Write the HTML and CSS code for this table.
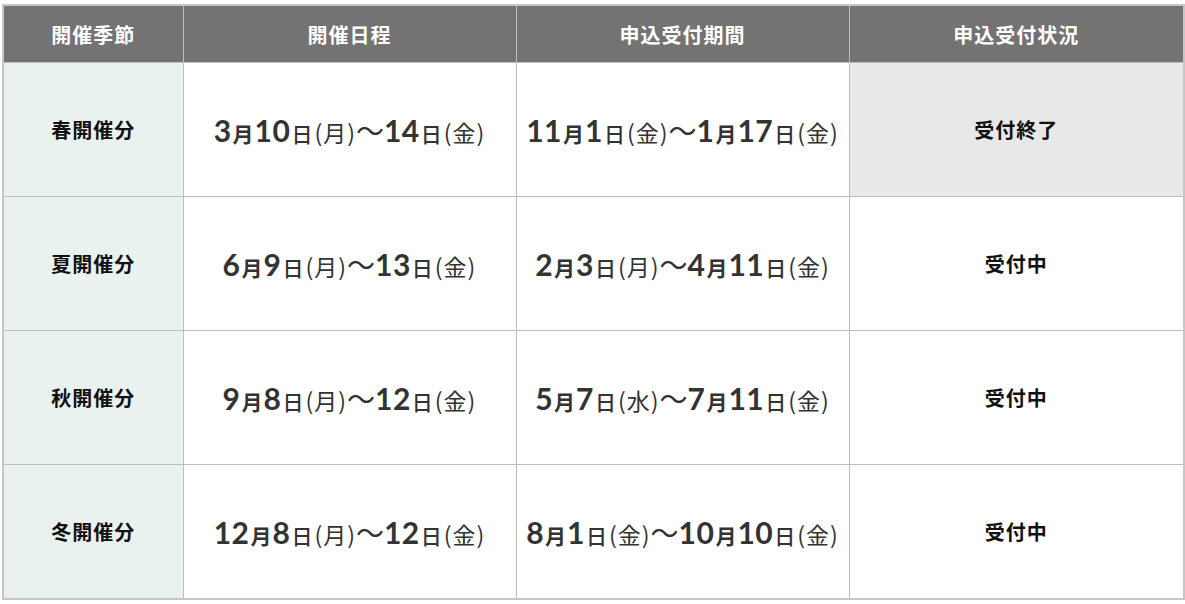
FILE: index.html
```html
<!DOCTYPE html>
<html lang="ja">
<head>
<meta charset="utf-8">
<link rel="stylesheet" href="styles.css">
</head>
<body>
<table class="sched">
  <colgroup>
    <col class="c1"><col class="c2"><col class="c3"><col class="c4">
  </colgroup>
  <thead>
    <tr><th>開催季節</th><th>開催日程</th><th>申込受付期間</th><th>申込受付状況</th></tr>
  </thead>
  <tbody>
    <tr>
      <td class="season">春開催分</td>
      <td class="date"><span class="n">3</span><span class="m">月</span><span class="n">10</span><span class="d">日</span><span class="w">(月)</span><span class="t">～</span><span class="n">14</span><span class="d">日</span><span class="w">(金)</span></td>
      <td class="date"><span class="n">11</span><span class="m">月</span><span class="n">1</span><span class="d">日</span><span class="w">(金)</span><span class="t">～</span><span class="n">1</span><span class="m">月</span><span class="n">17</span><span class="d">日</span><span class="w">(金)</span></td>
      <td class="status closed">受付終了</td>
    </tr>
    <tr>
      <td class="season">夏開催分</td>
      <td class="date"><span class="n">6</span><span class="m">月</span><span class="n">9</span><span class="d">日</span><span class="w">(月)</span><span class="t">～</span><span class="n">13</span><span class="d">日</span><span class="w">(金)</span></td>
      <td class="date"><span class="n">2</span><span class="m">月</span><span class="n">3</span><span class="d">日</span><span class="w">(月)</span><span class="t">～</span><span class="n">4</span><span class="m">月</span><span class="n">11</span><span class="d">日</span><span class="w">(金)</span></td>
      <td class="status">受付中</td>
    </tr>
    <tr>
      <td class="season">秋開催分</td>
      <td class="date"><span class="n">9</span><span class="m">月</span><span class="n">8</span><span class="d">日</span><span class="w">(月)</span><span class="t">～</span><span class="n">12</span><span class="d">日</span><span class="w">(金)</span></td>
      <td class="date"><span class="n">5</span><span class="m">月</span><span class="n">7</span><span class="d">日</span><span class="w">(水)</span><span class="t">～</span><span class="n">7</span><span class="m">月</span><span class="n">11</span><span class="d">日</span><span class="w">(金)</span></td>
      <td class="status">受付中</td>
    </tr>
    <tr>
      <td class="season">冬開催分</td>
      <td class="date"><span class="n">12</span><span class="m">月</span><span class="n">8</span><span class="d">日</span><span class="w">(月)</span><span class="t">～</span><span class="n">12</span><span class="d">日</span><span class="w">(金)</span></td>
      <td class="date"><span class="n">8</span><span class="m">月</span><span class="n">1</span><span class="d">日</span><span class="w">(金)</span><span class="t">～</span><span class="n">10</span><span class="m">月</span><span class="n">10</span><span class="d">日</span><span class="w">(金)</span></td>
      <td class="status">受付中</td>
    </tr>
  </tbody>
</table>
</body>
</html>
```
FILE: styles.css
```css
html, body {
  margin: 0;
  padding: 0;
  background: #ffffff;
}
body {
  padding: 4px 2px 0 2px;
  font-family: "Noto Sans CJK JP", "Noto Sans", sans-serif;
}
.sched {
  width: 1181px;
  border-collapse: collapse;
  table-layout: fixed;
  border: 2px solid #c6c6c6;
}
.c1 { width: 180px; }
.c2 { width: 333px; }
.c3 { width: 333px; }
.c4 { width: 335px; }
.sched th {
  height: 56px;
  padding: 0;
  background: #737373;
  color: #ffffff;
  font-size: 20px;
  font-weight: 700;
  border: 1px solid #bdbdbd;
  border-top: 0;
  text-align: center;
  vertical-align: middle;
  letter-spacing: 1px;
}
.sched td {
  height: 133px;
  padding: 0;
  border: 1px solid #bdbdbd;
  text-align: center;
  vertical-align: middle;
}
.season {
  background: #eaf2ef;
  color: #111111;
  font-size: 20px;
  font-weight: 700;
  letter-spacing: 1px;
}
.date {
  color: #333333;
  white-space: nowrap;
  line-height: 1;
}
.date .n {
  font-family: Lato, "Noto Sans", sans-serif;
  font-weight: 700;
  font-size: 30px;
  letter-spacing: 0.5px;
}
.date .m {
  font-weight: 700;
  font-size: 21px;
  margin: 0 1px;
}
.date .d {
  font-weight: 500;
  font-size: 21px;
  margin-left: 1px;
}
.date .w {
  font-weight: 400;
  font-size: 23px;
  margin-left: 2px;
  letter-spacing: 1px;
}
.date .t {
  font-weight: 400;
  font-size: 28px;
}
.status {
  color: #111111;
  font-size: 20px;
  font-weight: 700;
  letter-spacing: 1px;
  background: #ffffff;
}
.status.closed {
  background: #e8e8e8;
}
```
